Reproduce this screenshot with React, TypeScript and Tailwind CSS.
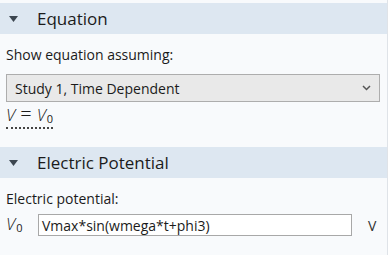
// Settings panel — Equation / Electric Potential sections
const font = { fontFamily: "'Segoe UI', 'Open Sans', sans-serif" };

function SectionHeader({ title }: { title: string }) {
  return (
    <div className="flex items-center h-[31px] bg-[#dde7f1] pl-[9px]">
      <svg width="9" height="6" viewBox="0 0 9 6" className="mr-[19px]">
        <path d="M0 0 H9 L4.5 6 Z" fill="#3c4650" />
      </svg>
      <span className="text-[17px] text-[#1b1b1b]">{title}</span>
    </div>
  );
}

function VZero() {
  return (
    <span className="inline-flex items-baseline">
      <span className="italic font-light text-[17px]">V</span>
      <span className="text-[11px] ml-[1px] translate-y-[2px]">0</span>
    </span>
  );
}

export default function App() {
  return (
    <div className="w-[391px] h-[255px] bg-white flex overflow-hidden" style={font}>
      <div className="w-[387px] bg-[#f8fafc] pt-[3px]">
        <SectionHeader title="Equation" />
        <div className="px-[6px] pt-[12px] pb-[18px]">
          <div className="text-[14px] text-[#1b1b1b] leading-[18px]">Show equation assuming:</div>
          <div className="mt-[10px] h-[28px] mr-[1px] flex items-center justify-between border border-[#adadad] bg-[#e9e9e9] pl-[8px] pr-[8px]">
            <span className="text-[14px] text-[#1b1b1b]">Study 1, Time Dependent</span>
            <svg width="9" height="6" viewBox="0 0 9 6">
              <path d="M1 1 L4.5 4.5 L8 1" stroke="#555" strokeWidth="1.5" fill="none" />
            </svg>
          </div>
          <div className="mt-[2px] inline-flex items-baseline border-b-2 border-dotted border-[#444] text-[#1b1b1b] leading-[20px]">
            <span className="italic font-light text-[17px]">V</span>
            <span className="text-[20px] font-light mx-[5px]">=</span>
            <VZero />
          </div>
        </div>
        <SectionHeader title="Electric Potential" />
        <div className="px-[6px] pt-[12px]">
          <div className="text-[14px] text-[#1b1b1b] leading-[18px]">Electric potential:</div>
          <div className="mt-[6px] flex items-center">
            <div className="w-[32px] text-[#1b1b1b] leading-[20px]">
              <VZero />
            </div>
            <div className="w-[314px] h-[22px] border border-[#a8a8a8] bg-white flex items-center pl-[3px] text-[14px] text-[#1b1b1b]">
              Vmax*sin(wmega*t+phi3)
            </div>
            <span className="ml-[16px] text-[14px] text-[#333]">V</span>
          </div>
        </div>
      </div>
      <div className="w-[1px] bg-[#dfe3e8]" />
    </div>
  );
}
